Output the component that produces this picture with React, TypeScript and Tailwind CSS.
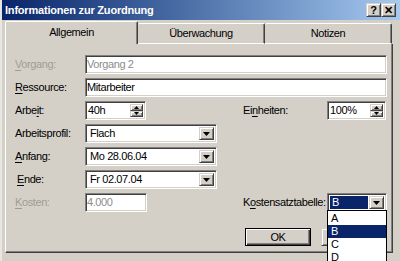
import React from 'react';

const sunken =
  'border border-t-[#808080] border-l-[#808080] border-b-white border-r-white shadow-[inset_1px_1px_0_#404040,inset_-1px_-1px_0_#d4d0c8]';
const raised =
  'border border-t-[#d4d0c8] border-l-[#d4d0c8] border-b-[#404040] border-r-[#404040] shadow-[inset_1px_1px_0_#fff,inset_-1px_-1px_0_#808080]';

const Arrow: React.FC<{ up?: boolean; small?: boolean }> = ({ up = false, small = false }) => (
  <svg width={small ? 5 : 7} height={small ? 3 : 4} viewBox="0 0 7 4" preserveAspectRatio="none">
    <path d={up ? 'M3.5 0L7 4H0z' : 'M0 0h7L3.5 4z'} fill="#000" />
  </svg>
);

const Label: React.FC<{ pre: string; u: string; post: string; disabled?: boolean; className?: string }> = ({
  pre,
  u,
  post,
  disabled,
  className = 'w-[70px]',
}) => (
  <span className={`${className} shrink-0 ${disabled ? 'text-[#a09c94]' : 'text-black'}`}>
    {pre}
    <span className="underline underline-offset-2">{u}</span>
    {post}
  </span>
);

const TextBox: React.FC<{ value: string; className: string; disabled?: boolean }> = ({ value, className, disabled }) => (
  <div className={`${sunken} ${className} flex h-[19px] items-center bg-white pl-[1px] ${disabled ? 'text-[#8c8c8c]' : 'text-black'}`}>
    {value}
  </div>
);

const SpinBox: React.FC<{ value: string; className: string }> = ({ value, className }) => (
  <div className={`${sunken} ${className} flex h-[19px] items-stretch bg-white p-[2px]`}>
    <span className="flex flex-1 items-center">{value}</span>
    <div className="flex w-[13px] flex-col">
      <div className={`${raised} flex flex-1 items-center justify-center bg-[#d4d0c8]`}>
        <Arrow up small />
      </div>
      <div className={`${raised} flex flex-1 items-center justify-center bg-[#d4d0c8]`}>
        <Arrow small />
      </div>
    </div>
  </div>
);

const Combo: React.FC<{ value: string; className: string; selected?: boolean }> = ({ value, className, selected }) => (
  <div className={`${sunken} ${className} flex h-[19px] items-stretch bg-white p-[2px]`}>
    <span
      className={`flex flex-1 items-center pl-[2px] ${selected ? 'mr-[1px] bg-[#0a246a] text-white' : 'text-black'}`}
    >
      {value}
    </span>
    <div className={`${raised} flex w-[15px] items-center justify-center bg-[#d4d0c8]`}>
      <Arrow />
    </div>
  </div>
);

export default function App() {
  return (
    <div className="relative h-[261px] w-[400px] overflow-hidden bg-[#d4d0c8] text-[11px] leading-none tracking-[-0.4px] font-['Tahoma','Liberation_Sans',sans-serif] border-l-2 border-l-[#e8e6e0]">
      {/* title bar */}
      <div className="flex h-[20px] items-center bg-gradient-to-r from-[#0a246a] to-[#a6caf0] pl-[3px] pr-[4px]">
        <span className="flex-1 text-[11px] font-bold tracking-[-0.2px] text-white">Informationen zur Zuordnung</span>
        <div className={`${raised} flex h-[14px] w-[15px] items-center justify-center bg-[#d4d0c8] text-[11px] font-bold tracking-normal`}>
          ?
        </div>
        <div className={`${raised} flex h-[14px] w-[15px] items-center justify-center bg-[#d4d0c8] text-[11px] font-bold tracking-normal`}>
          ✕
        </div>
      </div>

      {/* tabs */}
      <div className="mt-[1px] ml-[3px] flex h-[23px] items-end">
        <div className="relative z-10 flex h-[23px] w-[133px] items-center justify-center rounded-t-[2px] border-t border-l border-r border-t-white border-l-white border-r-[#404040] bg-[#d4d0c8] pb-[1px] shadow-[inset_-1px_0_0_#808080]">
          Allgemein
        </div>
        <div className="flex h-[21px] w-[127px] items-center justify-center rounded-t-[2px] border-t border-r border-b border-t-white border-r-[#404040] border-b-white bg-[#d4d0c8] shadow-[inset_-1px_0_0_#808080]">
          Überwachung
        </div>
        <div className="flex h-[21px] w-[127px] items-center justify-center rounded-t-[2px] border-t border-r border-b border-t-white border-r-[#404040] border-b-white bg-[#d4d0c8] shadow-[inset_-1px_0_0_#808080]">
          Notizen
        </div>
      </div>

      {/* panel */}
      <div className="ml-[3px] flex h-[209px] w-[388px] flex-col gap-[4px] border-l border-r border-b border-l-white border-r-[#404040] border-b-[#404040] pt-[11px] pl-[9px] shadow-[inset_-1px_-1px_0_#808080]">
        <div className="flex items-center">
          <Label pre="" u="V" post="organg:" disabled />
          <TextBox value="Vorgang 2" className="w-[302px]" disabled />
        </div>
        <div className="flex items-center">
          <Label pre="" u="R" post="essource:" />
          <TextBox value="Mitarbeiter" className="w-[302px]" />
        </div>
        <div className="flex items-center">
          <Label pre="Arbe" u="i" post="t:" />
          <SpinBox value="40h" className="w-[61px]" />
          <Label pre="Ei" u="n" post="heiten:" className="ml-[97px] w-[84px]" />
          <SpinBox value="100%" className="w-[59px]" />
        </div>
        <div className="flex items-center">
          <Label pre="Arbeitsprofil:" u="" post="" />
          <Combo value="Flach" className="w-[132px]" />
        </div>
        <div className="flex items-center">
          <Label pre="" u="A" post="nfang:" />
          <Combo value="Mo 28.06.04" className="w-[132px]" />
        </div>
        <div className="flex items-center">
          <Label pre="" u="E" post="nde:" className="w-[70px] pl-[2px]" />
          <Combo value="Fr 02.07.04" className="w-[132px]" />
        </div>
        <div className="flex items-center">
          <Label pre="" u="K" post="osten:" disabled />
          <TextBox value="4.000" className="w-[62px]" disabled />
          <Label pre="K" u="o" post="stensatztabelle:" className="ml-[96px] w-[84px]" />
          <Combo value="B" className="w-[60px]" selected />
        </div>
        <div className="mt-[12px] ml-[230px] flex gap-[10px]">
          <div className="flex h-[18px] w-[66px] items-center justify-center border border-black bg-[#d4d0c8] shadow-[inset_1px_1px_0_#fff,inset_-1px_-1px_0_#404040,inset_-2px_-2px_0_#808080]">
            OK
          </div>
          {/* second button sits behind the open list */}
          <div className={`${raised} h-[18px] w-[66px] bg-[#d4d0c8]`} />
        </div>
      </div>

      {/* open dropdown list */}
      <div className="absolute top-[210px] left-[325px] flex w-[60px] flex-col border border-black bg-white pt-[1px]">
        <div className="flex h-[13px] items-center pl-[3px]">A</div>
        <div className="flex h-[13px] items-center bg-[#0a246a] pl-[3px] text-white">B</div>
        <div className="flex h-[13px] items-center pl-[3px]">C</div>
        <div className="flex h-[13px] items-center pl-[3px]">D</div>
      </div>
    </div>
  );
}
